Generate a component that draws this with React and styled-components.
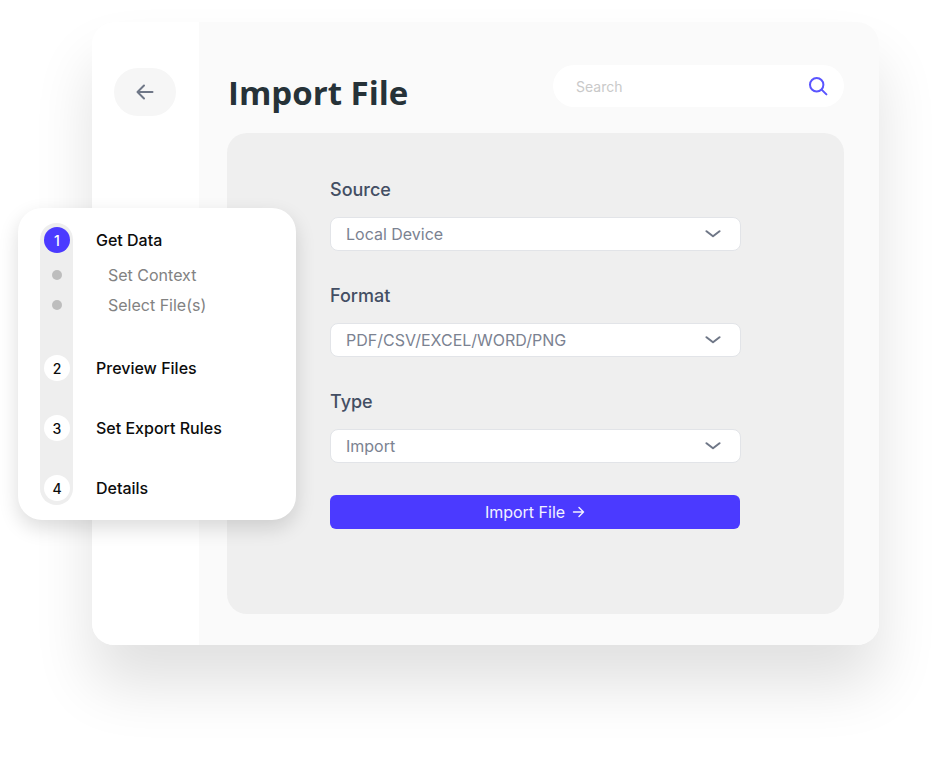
import React from "react";
import styled, { createGlobalStyle } from "styled-components";

const Global = createGlobalStyle`
  html, body {
    margin: 0;
    padding: 0;
    background: #fff;
    font-family: "Inter", sans-serif;
  }
`;

const Page = styled.div`
  position: relative;
  width: 950px;
  height: 761px;
  overflow: hidden;
  padding: 22px 0 0 92px;
  box-sizing: border-box;
`;

const AppWindow = styled.div`
  display: flex;
  width: 787px;
  height: 623px;
  border-radius: 22px;
  overflow: hidden;
  background: #fafafa;
`;

const Shadow = styled.div`
  width: 787px;
  height: 623px;
  border-radius: 22px;
  box-shadow: 0 40px 60px rgba(0, 0, 0, 0.12);
`;

const Sidebar = styled.aside`
  width: 107px;
  flex-shrink: 0;
  background: #fff;
  padding: 46px 0 0 22px;
  box-sizing: border-box;
`;

const BackButton = styled.button`
  display: flex;
  align-items: center;
  justify-content: center;
  width: 62px;
  height: 48px;
  padding: 0;
  border: none;
  border-radius: 24px;
  background: #f6f6f6;
  color: #6f7787;
`;

const Main = styled.main`
  flex: 1;
  padding: 43px 35px 31px 29px;
  box-sizing: border-box;
  display: flex;
  flex-direction: column;
`;

const Header = styled.header`
  display: flex;
  justify-content: space-between;
  align-items: flex-start;
  height: 68px;
`;

const Title = styled.h1`
  margin: 3px 0 0;
  font-family: "Open Sans", sans-serif;
  font-size: 33px;
  line-height: 50px;
  font-weight: 700;
  color: #263238;
`;

const Search = styled.div`
  display: flex;
  align-items: center;
  justify-content: space-between;
  width: 291px;
  height: 42px;
  padding: 0 16px 0 23px;
  box-sizing: border-box;
  border-radius: 21px;
  background: #fff;
  font-size: 14px;
  color: #c9c9c9;
`;

const Panel = styled.section`
  flex: 1;
  margin-left: -1px;
  padding: 44px 103px 0;
  border-radius: 20px;
  background: #efefef;
`;

const Field = styled.div`
  margin-bottom: 32px;
`;

const Label = styled.div`
  font-size: 18px;
  line-height: 26px;
  font-weight: 500;
  color: #434e63;
  margin-bottom: 14px;
`;

const Select = styled.div`
  display: flex;
  align-items: center;
  justify-content: space-between;
  height: 34px;
  padding: 0 19px 0 15px;
  box-sizing: border-box;
  border: 1px solid #e2e4e8;
  border-radius: 8px;
  background: #fff;
  font-size: 16px;
  color: #7b8291;
`;

const Submit = styled.button`
  display: flex;
  align-items: center;
  justify-content: center;
  gap: 7px;
  width: 410px;
  height: 34px;
  padding: 0;
  border: none;
  border-radius: 6px;
  background: #4b3aff;
  font-family: "Inter", sans-serif;
  font-size: 16px;
  color: #f2f1ff;
`;

const StepCard = styled.div`
  position: absolute;
  left: 18px;
  top: 208px;
  width: 278px;
  height: 312px;
  border-radius: 24px;
  background: #fff;
  box-shadow: 0 8px 20px rgba(0, 0, 0, 0.14);
`;

const Rail = styled.div`
  position: absolute;
  left: 22px;
  top: 15px;
  width: 33px;
  height: 282px;
  border-radius: 17px;
  background: #eeeeee;
`;

const Steps = styled.div`
  position: relative;
  display: flex;
  flex-direction: column;
  padding: 19px 0 0 26px;
`;

const Step = styled.div`
  display: flex;
  align-items: center;
  height: 26px;
  margin-top: ${(p) => p.$top || 0}px;
  font-size: 16px;
  font-weight: 500;
  color: #0c0c0c;
`;

const Bullet = styled.span`
  display: flex;
  align-items: center;
  justify-content: center;
  width: 26px;
  height: 26px;
  margin-right: 26px;
  border-radius: 50%;
  flex-shrink: 0;
  font-size: 14px;
  background: ${(p) => (p.$active ? "#4b3aff" : "#fff")};
  color: ${(p) => (p.$active ? "#fff" : "#0c0c0c")};
`;

const SubStep = styled.div`
  display: flex;
  align-items: center;
  height: 30px;
  font-size: 16px;
  color: #828282;
`;

const Dot = styled.span`
  width: 10px;
  height: 10px;
  margin: 0 46px 0 8px;
  border-radius: 50%;
  background: #bdbdbd;
  flex-shrink: 0;
`;

const Chevron = () => (
  <svg width="16" height="8" viewBox="0 0 16 8" fill="none" stroke="#6f7787" strokeWidth="2" strokeLinecap="round" strokeLinejoin="round">
    <path d="M1.5 1.2 8 6.2l6.5-5" />
  </svg>
);

const fields = [
  { label: "Source", value: "Local Device" },
  { label: "Format", value: "PDF/CSV/EXCEL/WORD/PNG" },
  { label: "Type", value: "Import" },
];

const App = () => {
  return (
    <Page>
      <Global />
      <Shadow>
        <AppWindow>
          <Sidebar>
            <BackButton aria-label="Back">
              <svg width="18" height="16" viewBox="0 0 18 16" fill="none" stroke="currentColor" strokeWidth="2" strokeLinecap="round" strokeLinejoin="round">
                <path d="M16.5 8H1.5M8 1.5 1.5 8 8 14.5" />
              </svg>
            </BackButton>
          </Sidebar>
          <Main>
            <Header>
              <Title>Import File</Title>
              <Search>
                <span>Search</span>
                <svg width="20" height="20" viewBox="0 0 20 20" fill="none" stroke="#5a55ff" strokeWidth="2" strokeLinecap="round">
                  <circle cx="8.7" cy="8.7" r="6.7" />
                  <path d="m13.6 13.6 4.8 4.8" />
                </svg>
              </Search>
            </Header>
            <Panel>
              {fields.map((f) => (
                <Field key={f.label}>
                  <Label>{f.label}</Label>
                  <Select>
                    {f.value}
                    <Chevron />
                  </Select>
                </Field>
              ))}
              <Submit>
                Import File
                <svg width="13" height="12" viewBox="0 0 13 12" fill="none" stroke="currentColor" strokeWidth="1.4" strokeLinecap="round" strokeLinejoin="round">
                  <path d="M1.5 6h10M7 1.5 11.5 6 7 10.5" />
                </svg>
              </Submit>
            </Panel>
          </Main>
        </AppWindow>
      </Shadow>
      <StepCard>
        <Rail />
        <Steps>
          <Step><Bullet $active>1</Bullet>Get Data</Step>
          <SubStep style={{ marginTop: 7 }}><Dot />Set Context</SubStep>
          <SubStep><Dot />Select File(s)</SubStep>
          <Step $top={35}><Bullet>2</Bullet>Preview Files</Step>
          <Step $top={34}><Bullet>3</Bullet>Set Export Rules</Step>
          <Step $top={34}><Bullet>4</Bullet>Details</Step>
        </Steps>
      </StepCard>
    </Page>
  );
};

export default App;
